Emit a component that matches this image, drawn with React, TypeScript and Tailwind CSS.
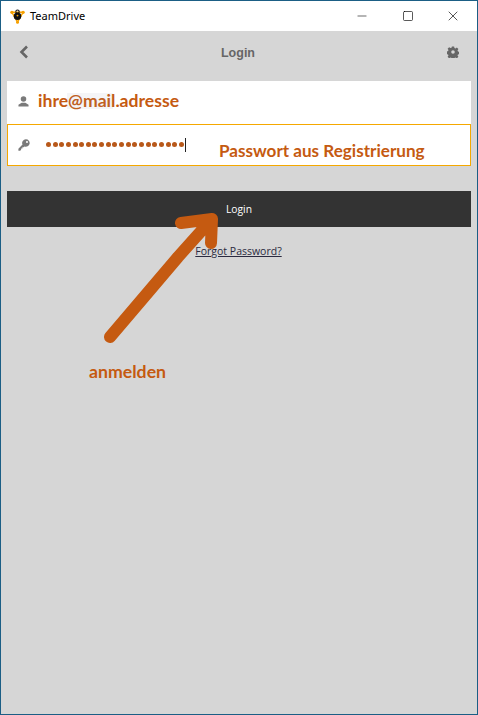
import { Minus, Square, X } from 'lucide-react';

function TeamDriveLogo() {
  return (
    <svg width="15" height="15" viewBox="0 0 16 16" className="flex-none">
      <path d="M2 3.5 L14 3.5 L8 14 Z" fill="none" stroke="#f5a000" strokeWidth="1.5" />
      <circle cx="2" cy="3.5" r="1.7" fill="#f5a000" />
      <circle cx="14" cy="3.5" r="1.7" fill="#f5a000" />
      <circle cx="8" cy="14.2" r="1.6" fill="#f5a000" />
      <circle cx="8" cy="7.6" r="4" fill="#111" />
      <circle cx="8" cy="2.8" r="1.8" fill="none" stroke="#111" strokeWidth="1.2" />
      <circle cx="8" cy="7" r="1" fill="#f5a000" />
    </svg>
  );
}

function TitleBar() {
  return (
    <div className="h-[30px] flex-none flex items-center bg-white">
      <div className="ml-[9px] flex items-center gap-[5px]">
        <TeamDriveLogo />
        <span className="text-[11px] text-black">TeamDrive</span>
      </div>
      <div className="ml-auto mr-[2px] flex items-center text-black">
        <div className="w-[46px] flex justify-center">
          <Minus size={14} strokeWidth={1} />
        </div>
        <div className="w-[46px] flex justify-center">
          <Square size={12} strokeWidth={1.3} />
        </div>
        <div className="w-[44px] flex justify-center">
          <X size={16} strokeWidth={1} />
        </div>
      </div>
    </div>
  );
}

function BackIcon() {
  return (
    <svg width="10" height="14" viewBox="0 0 10 14" className="flex-none">
      <path d="M8 1.5 L2.5 7 L8 12.5" fill="none" stroke="#666" strokeWidth="2.6" />
    </svg>
  );
}

function GearIcon() {
  return (
    <svg width="12" height="12" viewBox="0 0 14 14" fill="#666">
      <path
        fillRule="evenodd"
        d="M5.7 0.5h2.6l.4 1.8 1.2.5 1.6-1 1.8 1.8-1 1.6.5 1.2 1.8.4v2.6l-1.8.4-.5 1.2 1 1.6-1.8 1.8-1.6-1-1.2.5-.4 1.8H5.7l-.4-1.8-1.2-.5-1.6 1-1.8-1.8 1-1.6-.5-1.2-1.8-.4V6.4l1.8-.4.5-1.2-1-1.6 1.8-1.8 1.6 1 1.2-.5zM7 4.9a2.1 2.1 0 1 0 0 4.2 2.1 2.1 0 0 0 0-4.2z"
      />
    </svg>
  );
}

function UserIcon() {
  return (
    <svg width="11" height="11" viewBox="0 0 12 12" fill="#7a7a7a">
      <circle cx="6" cy="3.4" r="3" />
      <path d="M0.5 11.5 V9.5 L4 7.4 H8 L11.5 9.5 V11.5 Z" />
    </svg>
  );
}

function KeyIcon() {
  return (
    <svg width="12" height="12" viewBox="0 0 12 12" fill="#7a7a7a">
      <path
        fillRule="evenodd"
        d="M8 0.3a3.7 3.7 0 1 1-1.5 7.1L5.6 8.3H4.4v1.3H3.1v1.3L2 11.7H.4V9.8l4.1-4.2A3.7 3.7 0 0 1 8 .3zm1 1.7a1 1 0 1 0 0 2 1 1 0 0 0 0-2z"
      />
    </svg>
  );
}

function Arrow() {
  return (
    <svg width="130" height="140" viewBox="0 0 130 140" className="absolute left-[99px] top-[209px]">
      <path
        d="M10 127 L50 80 L78 47 L112 9 M81 13 L112 9 L111 33"
        fill="none"
        stroke="#c55a11"
        strokeWidth="12"
        strokeLinecap="round"
        strokeLinejoin="round"
      />
    </svg>
  );
}

export default function App() {
  return (
    <div className="relative w-[478px] h-[715px] flex flex-col border border-[#1b5e85] bg-[#d6d6d6] font-['Noto_Sans','Open_Sans',sans-serif] overflow-hidden">
      <TitleBar />

      <div className="h-[42px] mb-[8px] flex-none flex items-center pl-[18px] pr-[18px]">
        <BackIcon />
        <span className="flex-1 pt-[3px] text-center text-[12.5px] font-bold text-[#666] font-['Liberation_Sans',sans-serif]">Login</span>
        <GearIcon />
      </div>

      <div className="px-[6px]">
        <div className="h-[43px] flex items-center bg-white pl-[11px] pb-[3px]">
          <UserIcon />
          <span className="ml-[9px] text-[17.6px] font-bold leading-none text-[#c55a11] font-['Lato',sans-serif]">
            ihre@mail.adresse
          </span>
        </div>
        <div className="h-[42px] flex items-center border border-[#f5a800] bg-white pl-[10px] pb-[1px]">
          <KeyIcon />
          <span className="ml-[16px] h-[14px] flex items-center gap-[1.65px]">
            {Array.from({ length: 21 }).map((_, i) => (
              <span key={i} className="w-[5px] h-[5px] rounded-full bg-[#b8581a]" />
            ))}
          </span>
          <span className="ml-[1px] w-px h-[14px] bg-[#222]" />
        </div>

        <button className="mt-[25px] w-full h-[36px] pt-[1px] bg-[#333333] text-white text-[10.3px] font-['Open_Sans',sans-serif]">
          Login
        </button>
        <div className="mt-[10px] pr-[1px] text-center">
          <span className="text-[10.5px] underline text-[#2a2a40] font-['Open_Sans',sans-serif]">Forgot Password?</span>
        </div>
      </div>

      <Arrow />
      <div className="absolute left-[66px] top-[92px] w-[46px] h-[16px] backdrop-blur-[0.5px] bg-gray-400/10" />
      <span className="absolute left-[218px] top-[141px] text-[17.1px] font-bold leading-none text-[#c55a11] font-['Lato',sans-serif]">
        Passwort aus Registrierung
      </span>
      <span className="absolute left-[88px] top-[362px] text-[17.7px] font-bold leading-none text-[#c55a11] font-['Lato',sans-serif]">
        anmelden
      </span>
    </div>
  );
}
